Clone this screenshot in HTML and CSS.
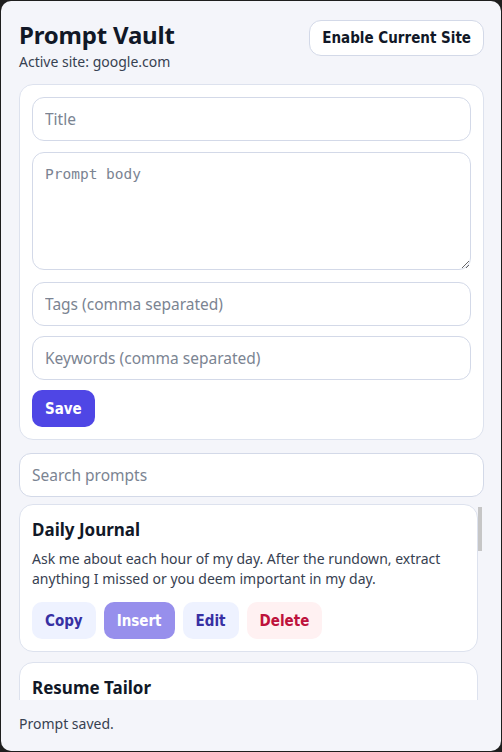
FILE: index.html
```html
<!DOCTYPE html>
<html lang="en">
<head>
<meta charset="utf-8">
<title>Prompt Vault</title>
<link rel="stylesheet" href="styles.css">
</head>
<body>
<div class="app">
  <header class="header">
    <div class="brand">
      <h1 class="title">Prompt Vault</h1>
      <div class="site">Active site: google.com</div>
    </div>
    <button class="btn btn-outline">Enable Current Site</button>
  </header>

  <section class="card form">
    <input class="field" type="text" placeholder="Title">
    <textarea class="field area" placeholder="Prompt body"></textarea>
    <input class="field" type="text" placeholder="Tags (comma separated)">
    <input class="field" type="text" placeholder="Keywords (comma separated)">
    <div class="row"><button class="btn btn-primary">Save</button></div>
  </section>

  <input class="field search" type="text" placeholder="Search prompts">

  <div class="list-wrap">
    <div class="list">
      <article class="card item">
        <h2 class="item-title">Daily Journal</h2>
        <p class="item-body">Ask me about each hour of my day. After the rundown, extract anything I missed or you deem important in my day.</p>
        <div class="actions">
          <button class="btn btn-soft">Copy</button>
          <button class="btn btn-primary disabled">Insert</button>
          <button class="btn btn-soft">Edit</button>
          <button class="btn btn-danger">Delete</button>
        </div>
      </article>
      <article class="card item">
        <h2 class="item-title">Resume Tailor</h2>
        <p class="item-body">Rewrite my resume bullet points so they match the job description I paste below.</p>
        <div class="actions">
          <button class="btn btn-soft">Copy</button>
          <button class="btn btn-primary disabled">Insert</button>
          <button class="btn btn-soft">Edit</button>
          <button class="btn btn-danger">Delete</button>
        </div>
      </article>
      <article class="card item">
        <h2 class="item-title">Email Polish</h2>
        <p class="item-body">Make this email clearer and more friendly while keeping it short.</p>
        <div class="actions">
          <button class="btn btn-soft">Copy</button>
          <button class="btn btn-primary disabled">Insert</button>
          <button class="btn btn-soft">Edit</button>
          <button class="btn btn-danger">Delete</button>
        </div>
      </article>
      <article class="card item">
        <h2 class="item-title">Code Review</h2>
        <p class="item-body">Review the following code for bugs, readability and performance issues.</p>
        <div class="actions">
          <button class="btn btn-soft">Copy</button>
          <button class="btn btn-primary disabled">Insert</button>
          <button class="btn btn-soft">Edit</button>
          <button class="btn btn-danger">Delete</button>
        </div>
      </article>
    </div>
    <div class="thumb"></div>
  </div>

  <footer class="status">Prompt saved.</footer>
</div>
</body>
</html>
```

FILE: styles.css
```css
* { box-sizing: border-box; }

html, body {
  margin: 0;
  padding: 0;
  background: #1e1e1e;
}

body {
  font-family: "Noto Sans", "Open Sans", sans-serif;
  color: #111827;
}

.app {
  margin: 1px;
  height: 750px;
  background: #f4f5fa;
  border-radius: 10px;
  padding: 18px 17px 0 18px;
  display: flex;
  flex-direction: column;
  overflow: hidden;
}

.header {
  display: flex;
  justify-content: space-between;
  align-items: flex-start;
  margin-bottom: 12px;
}

.title {
  margin: 0;
  font-size: 24px;
  font-weight: 700;
  line-height: 32px;
  color: #111827;
  letter-spacing: -0.2px;
}

.site {
  font-size: 14px;
  line-height: 20px;
  color: #374151;
  margin-top: 1px;
}

.btn {
  font-family: "DejaVu Sans Condensed", "DejaVu Sans", sans-serif;
  font-stretch: condensed;
  font-weight: 700;
  font-size: 15px;
  border: none;
  border-radius: 10px;
  height: 37px;
  padding: 0 13px;
  cursor: pointer;
}

.btn-outline {
  background: #ffffff;
  border: 1px solid #d3d9e8;
  border-radius: 12px;
  color: #111827;
  height: 36px;
  padding: 0 12px;
  margin-top: 1px;
}

.btn-primary {
  background: #4f46e5;
  color: #ffffff;
}

.btn-primary.disabled {
  background: #978fec;
}

.btn-soft {
  background: #eef2ff;
  color: #3730a3;
}

.btn-danger {
  background: #fff1f2;
  color: #be123c;
}

.card {
  background: #ffffff;
  border: 1px solid #dde2ee;
  border-radius: 14px;
}

.form {
  padding: 12px;
  display: flex;
  flex-direction: column;
  gap: 10px;
}

.field {
  display: block;
  width: 100%;
  height: 44px;
  border: 1px solid #d3d9e8;
  border-radius: 12px;
  background: #ffffff;
  padding: 0 12px;
  font-family: "Noto Sans", "Open Sans", sans-serif;
  font-size: 15.5px;
  color: #111827;
  outline: none;
}

.field::placeholder {
  color: #7b8492;
}

.area {
  height: 118px;
  margin-top: 1px;
  padding: 11px 12px;
  font-family: "DejaVu Sans Mono", monospace;
  font-size: 14.5px;
  line-height: 20px;
  margin-bottom: 2px;
}

.row {
  display: flex;
}

.search {
  margin-top: 13px;
}

.list-wrap {
  position: relative;
  margin-top: 7px;
  flex: 1;
  min-height: 0;
  display: flex;
}

.list {
  flex: 1;
  min-height: 0;
  overflow-y: auto;
  scrollbar-width: none;
  padding-right: 6px;
  display: flex;
  flex-direction: column;
  gap: 10px;
}

.list::-webkit-scrollbar {
  display: none;
}

.thumb {
  position: absolute;
  right: 2px;
  top: 3px;
  width: 4px;
  height: 44px;
  background: #c6c6c6;
}

.item {
  flex: none;
  padding: 13px 12px 12px;
}

.item-title {
  margin: 0;
  font-size: 17px;
  font-weight: 700;
  line-height: 24px;
  color: #111827;
}

.item-body {
  margin: 7px 0 0;
  font-size: 14px;
  line-height: 20px;
  color: #374151;
}

.actions {
  margin-top: 13px;
  display: flex;
  gap: 8px;
}

.status {
  flex: none;
  height: 51px;
  padding-top: 14px;
  font-size: 14px;
  line-height: 20px;
  color: #374151;
}
```
